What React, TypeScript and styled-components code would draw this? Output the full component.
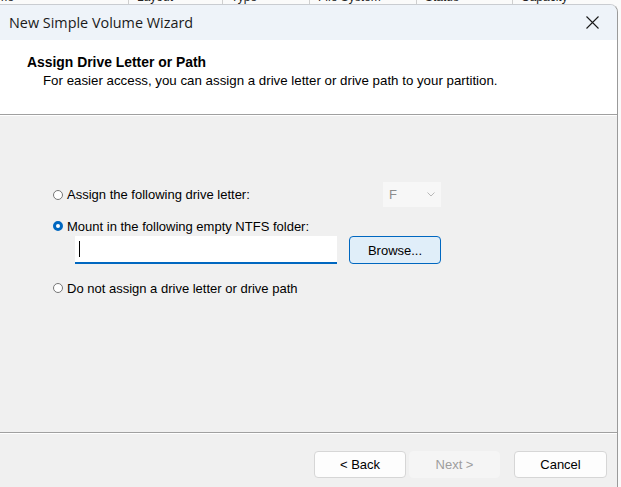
import React from "react";
import styled, { createGlobalStyle } from "styled-components";

const GlobalStyle = createGlobalStyle`
  html, body { margin: 0; padding: 0; background: #fafafa; overflow: hidden; }
  #root { width: 621px; height: 487px; }
`;

const Page = styled.div`
  width: 621px;
  height: 487px;
  display: flex;
  flex-direction: column;
  overflow: hidden;
  background: #fafafa;
`;

const BackStrip = styled.div`
  height: 4px;
  overflow: hidden;
  flex-shrink: 0;
`;

const ColumnRow = styled.div`
  display: flex;
  height: 14px;
  margin-top: -10px;
  margin-left: -26px;
  font-family: "Liberation Sans", Arial, sans-serif;
  font-size: 12px;
  color: #222;
`;

const ColumnHead = styled.div<{ $w: number }>`
  width: ${(p) => p.$w}px;
  flex-shrink: 0;
  padding-left: 8px;
  box-sizing: border-box;
  border-right: 1px solid #cfcfcf;
  line-height: 14px;
  white-space: nowrap;
`;

const Window = styled.div`
  flex: 1;
  margin-right: 3px;
  display: flex;
  flex-direction: column;
  border-top: 1px solid #c9ccd1;
  border-right: 1px solid #9a9a9a;
  border-top-right-radius: 8px;
  overflow: hidden;
  background: #f0f0f0;
  font-family: "Liberation Sans", Arial, sans-serif;
`;

const TitleBar = styled.div`
  height: 35px;
  flex-shrink: 0;
  background: #eef3f9;
  display: flex;
  align-items: center;
  justify-content: space-between;
  padding: 0 12px 0 9px;
`;

const Title = styled.div`
  font-family: "Open Sans", "Noto Sans", sans-serif;
  font-size: 14.4px;
  color: #1a1a1a;
`;

const CloseButton = styled.div`
  width: 26px;
  height: 26px;
  display: flex;
  align-items: center;
  justify-content: center;
`;

const Header = styled.div`
  height: 74px;
  flex-shrink: 0;
  background: #ffffff;
  box-sizing: border-box;
  padding: 14px 0 0 27px;
`;

const HeaderTitle = styled.div`
  font-size: 13.9px;
  font-weight: bold;
  color: #000;
  line-height: 16px;
`;

const HeaderSub = styled.div`
  font-size: 13.3px;
  color: #000;
  line-height: 16px;
  margin-top: 3px;
  padding-left: 16px;
`;

const Separator = styled.div`
  height: 0;
  flex-shrink: 0;
  border-top: 1px solid #a0a0a0;
  border-bottom: 1px solid #ffffff;
`;

const Body = styled.div`
  height: 316px;
  flex-shrink: 0;
  box-sizing: border-box;
  padding: 66px 0 0 53px;
  display: flex;
  flex-direction: column;
`;

const Options = styled.div`
  width: 388px;
  display: flex;
  flex-direction: column;
`;

const OptionRow = styled.div<{ $gap: number }>`
  display: flex;
  align-items: center;
  justify-content: space-between;
  margin-top: ${(p) => p.$gap}px;
`;

const RadioLabel = styled.label`
  display: flex;
  align-items: center;
  gap: 4px;
  font-size: 13px;
  color: #000;
  height: 18px;
`;

const Radio = styled.span<{ $checked?: boolean }>`
  width: 10px;
  height: 10px;
  box-sizing: border-box;
  border-radius: 50%;
  flex-shrink: 0;
  border: ${(p) => (p.$checked ? "3px solid #0067c0" : "1px solid #767676")};
  background: #ffffff;
`;

const Select = styled.div`
  width: 58px;
  height: 25px;
  box-sizing: border-box;
  background: #f7f7f7;
  display: flex;
  align-items: center;
  justify-content: space-between;
  padding: 0 6px 0 6px;
  font-size: 13px;
  color: #8d8d8d;
`;

const FieldRow = styled.div`
  display: flex;
  align-items: stretch;
  gap: 12px;
  margin-top: 1px;
  margin-left: 22px;
  height: 28px;
`;

const TextBox = styled.div`
  width: 262px;
  box-sizing: border-box;
  background: #ffffff;
  border-bottom: 2px solid #0067c0;
  display: flex;
  align-items: center;
  padding-left: 4px;
`;

const Caret = styled.span`
  width: 1px;
  height: 16px;
  background: #000;
`;

const Button = styled.div<{ $w: number; $variant?: "accent" | "disabled" }>`
  width: ${(p) => p.$w}px;
  box-sizing: border-box;
  border-radius: 4px;
  display: flex;
  align-items: center;
  justify-content: center;
  font-size: 13px;
  border: 1px solid
    ${(p) =>
      p.$variant === "accent" ? "#0067c0" : p.$variant === "disabled" ? "#f5f5f5" : "#d6d6d6"};
  background: ${(p) =>
    p.$variant === "accent" ? "#e0eef9" : p.$variant === "disabled" ? "#f5f5f5" : "#fdfdfd"};
  color: ${(p) => (p.$variant === "disabled" ? "#9d9d9d" : "#000")};
`;

const Footer = styled.div`
  flex: 1;
  display: flex;
  align-items: flex-start;
  justify-content: flex-end;
  padding: 17px 10px 0 0;
`;

const FooterButtons = styled.div`
  display: flex;
  height: 27px;
  gap: 3px;
`;

const CancelWrap = styled.div`
  display: flex;
  margin-left: 11px;
`;

export default function App() {
  return (
    <>
      <GlobalStyle />
      <Page>
        <BackStrip>
          <ColumnRow>
            <ColumnHead $w={155}>Name</ColumnHead>
            <ColumnHead $w={94}>Layout</ColumnHead>
            <ColumnHead $w={87}>Type</ColumnHead>
            <ColumnHead $w={107}>File System</ColumnHead>
            <ColumnHead $w={96}>Status</ColumnHead>
            <ColumnHead $w={120}>Capacity</ColumnHead>
          </ColumnRow>
        </BackStrip>
        <Window>
          <TitleBar>
            <Title>New Simple Volume Wizard</Title>
            <CloseButton>
              <svg width="13" height="13" viewBox="0 0 13 13">
                <path d="M0.5 0.5 L12.5 12.5 M12.5 0.5 L0.5 12.5" stroke="#1a1a1a" strokeWidth="1.1" />
              </svg>
            </CloseButton>
          </TitleBar>
          <Header>
            <HeaderTitle>Assign Drive Letter or Path</HeaderTitle>
            <HeaderSub>
              For easier access, you can assign a drive letter or drive path to your partition.
            </HeaderSub>
          </Header>
          <Separator />
          <Body>
            <Options>
              <OptionRow $gap={0}>
                <RadioLabel>
                  <Radio />
                  Assign the following drive letter:
                </RadioLabel>
                <Select>
                  F
                  <svg width="8" height="5" viewBox="0 0 8 5">
                    <path d="M0.5 0.5 L4 4 L7.5 0.5" stroke="#b8b8b8" strokeWidth="1" fill="none" />
                  </svg>
                </Select>
              </OptionRow>
              <OptionRow $gap={10}>
                <RadioLabel>
                  <Radio $checked />
                  Mount in the following empty NTFS folder:
                </RadioLabel>
              </OptionRow>
              <FieldRow>
                <TextBox>
                  <Caret />
                </TextBox>
                <Button $w={92} $variant="accent">Browse...</Button>
              </FieldRow>
              <OptionRow $gap={15}>
                <RadioLabel>
                  <Radio />
                  Do not assign a drive letter or drive path
                </RadioLabel>
              </OptionRow>
            </Options>
          </Body>
          <Separator />
          <Footer>
            <FooterButtons>
              <Button $w={92}>&lt; Back</Button>
              <Button $w={91} $variant="disabled">Next &gt;</Button>
              <CancelWrap>
                <Button $w={93}>Cancel</Button>
              </CancelWrap>
            </FooterButtons>
          </Footer>
        </Window>
      </Page>
    </>
  );
}
